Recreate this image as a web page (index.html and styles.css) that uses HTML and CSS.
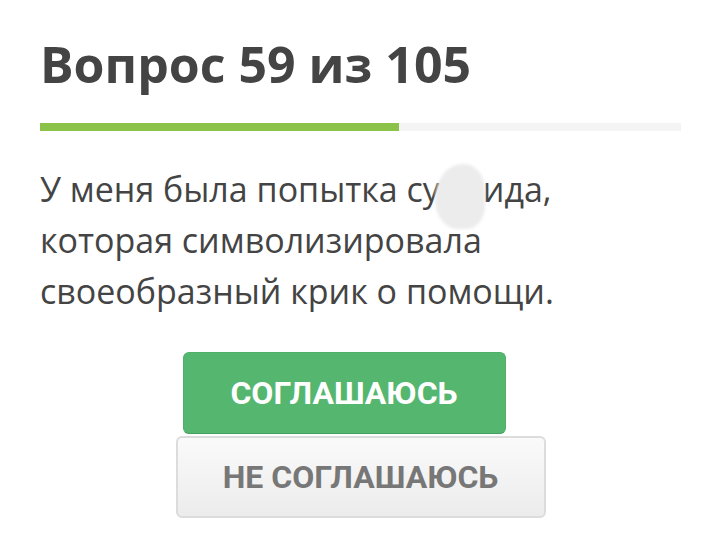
FILE: index.html
```html
<!DOCTYPE html>
<html lang="ru">

<head>
    <meta charset="UTF-8">
    <meta name="viewport" content="width=device-width, initial-scale=1.0">
    <title>Тест</title>
    <link rel="stylesheet" href="styles.css">
</head>

<body>

    <div class="quiz">
        <h1 class="quiz-title">Вопрос 59 из 105</h1>

        <!-- прогресс: 59 из 105 -->
        <div class="progress">
            <div class="progress-fill" style="width: 56%"></div>
        </div>

        <div class="question">
            <p>У меня была попытка суицида, которая символизировала своеобразный крик о помощи.</p>
            <span class="smudge"></span>
        </div>

        <div class="answers">
            <button class="btn btn-agree">Соглашаюсь</button>
            <button class="btn btn-disagree">Не соглашаюсь</button>
        </div>
    </div>

</body>

</html>
```

FILE: styles.css
```css
* {
    box-sizing: border-box;
}

body {
    margin: 0;
    background-color: #fff;
    font-family: 'Open Sans', 'Noto Sans', sans-serif;
    color: #444;
}

.quiz {
    padding: 32px 39px 0 40px;
}

.quiz-title {
    margin: 0;
    font-size: 50px;
    font-weight: 700;
    line-height: 64px;
    color: #444;
}

.progress {
    margin-top: 27px;
    height: 8px;
    background-color: #f4f4f4;
}

.progress-fill {
    height: 100%;
    background-color: #8bc34a;
}

.question {
    position: relative;
    margin-top: 33px;
}

.question p {
    margin: 0;
    font-size: 34px;
    line-height: 51px;
    color: #444;
    max-width: 560px;
}

.smudge {
    position: absolute;
    left: 395px;
    top: 0;
    width: 50px;
    height: 65px;
    border-radius: 60% 45% 40% 50%;
    background-color: #ececec;
    filter: blur(1.5px);
}

.answers {
    display: flex;
    flex-direction: column;
    align-items: center;
    margin-top: 35px;
}

.btn {
    font-family: 'Roboto', 'Liberation Sans', sans-serif;
    font-weight: 700;
    font-size: 32px;
    text-transform: uppercase;
    border-radius: 6px;
    cursor: pointer;
}

.btn-agree {
    width: 323px;
    height: 82px;
    margin-left: -33px;
    border: 1px solid #4fb06a;
    border-bottom-color: #46a05f;
    background-color: #55b76f;
    color: #fff;
}

.btn-disagree {
    width: 370px;
    height: 82px;
    margin-top: 2px;
    border: 2px solid #dcdcdc;
    background: linear-gradient(#fafafa, #ececec);
    color: #777;
}
```
